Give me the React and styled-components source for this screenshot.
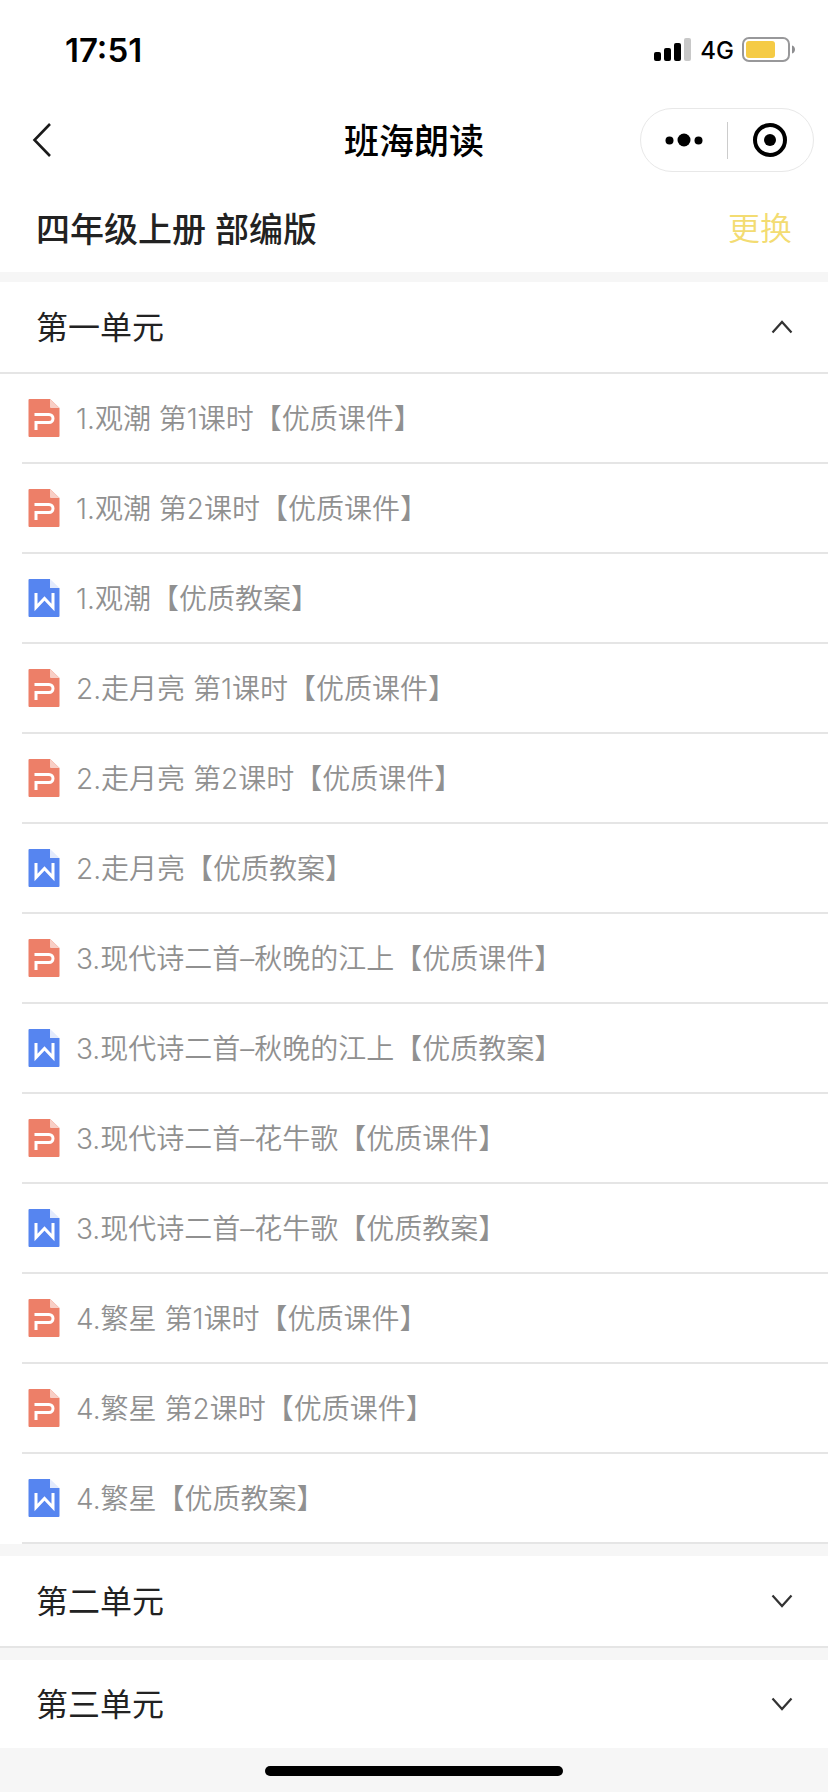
import React, { useState } from "react";
import styled, { createGlobalStyle } from "styled-components";

const units = [
  {
    id: 1,
    name: "第一单元",
    files: [
      { type: "ppt", name: "1.观潮 第1课时【优质课件】" },
      { type: "ppt", name: "1.观潮 第2课时【优质课件】" },
      { type: "word", name: "1.观潮【优质教案】" },
      { type: "ppt", name: "2.走月亮 第1课时【优质课件】" },
      { type: "ppt", name: "2.走月亮 第2课时【优质课件】" },
      { type: "word", name: "2.走月亮【优质教案】" },
      { type: "ppt", name: "3.现代诗二首–秋晚的江上【优质课件】" },
      { type: "word", name: "3.现代诗二首–秋晚的江上【优质教案】" },
      { type: "ppt", name: "3.现代诗二首–花牛歌【优质课件】" },
      { type: "word", name: "3.现代诗二首–花牛歌【优质教案】" },
      { type: "ppt", name: "4.繁星 第1课时【优质课件】" },
      { type: "ppt", name: "4.繁星 第2课时【优质课件】" },
      { type: "word", name: "4.繁星【优质教案】" },
    ],
  },
  { id: 2, name: "第二单元", files: [] },
  { id: 3, name: "第三单元", files: [] },
];

const SignalIcon = () => (
  <svg width="38" height="24" viewBox="0 0 38 24" aria-hidden="true">
    <rect x="0" y="14" width="7" height="9" rx="2" />
    <rect x="10" y="10" width="7" height="13" rx="2" />
    <rect x="20" y="5" width="7" height="18" rx="2" />
    <rect x="30" y="0" width="7" height="23" rx="2" fill="#c8c8c8" />
  </svg>
);

const BatteryIcon = () => (
  <svg width="53" height="26" viewBox="0 0 53 26" aria-hidden="true">
    <rect
      x="1"
      y="1"
      width="46"
      height="23"
      rx="6"
      fill="none"
      stroke="#98989a"
      strokeWidth="2"
    />
    <rect x="4" y="4" width="29" height="17" rx="3" fill="#f5cb45" />
    <path d="M50 8.500c4 1 4 7 0 8z" fill="#8e8e90" />
  </svg>
);

const BackIcon = () => (
  <svg width="20" height="36" viewBox="0 0 20 36" aria-hidden="true">
    <path
      d="M18 2 2.500 18 18 34"
      fill="none"
      stroke="#1a1a1a"
      strokeWidth="2.600"
    />
  </svg>
);

const MoreIcon = () => (
  <svg width="38" height="36" viewBox="0 0 38 36" aria-hidden="true">
    <circle cx="4.500" cy="18.500" r="4" />
    <circle cx="19" cy="18" r="6.500" />
    <circle cx="33.500" cy="18.500" r="4" />
  </svg>
);

const CloseIcon = () => (
  <svg width="36" height="36" viewBox="0 0 36 36" aria-hidden="true">
    <circle cx="18" cy="18" r="15" fill="none" stroke="#000" strokeWidth="4" />
    <circle cx="18" cy="18" r="6" />
  </svg>
);

const ArrowIcon = ({ open }) => (
  <svg width="22" height="14" viewBox="0 0 22 14" aria-hidden="true">
    <path
      d={open ? "M1.500 12.500 11 2l9.500 10.500" : "M1.500 1.500 11 12l9.500-10.500"}
      fill="none"
      stroke="#333"
      strokeWidth="2.200"
    />
  </svg>
);

const PptIcon = () => (
  <svg width="32" height="40" viewBox="0 0 32 40" aria-hidden="true">
    <path
      d="M1.500 1H22l9.500 9v28a1 1 0 0 1-1 1h-29a1 1 0 0 1-1-1V2a1 1 0 0 1 1-1z"
      fill="#ed7f68"
    />
    <path d="M22 1v8a1 1 0 0 0 1 1h8.500z" fill="#f8cfc6" />
    <path
      d="M6.500 16.500H21a4 4 0 0 1 0 8H8V32"
      fill="none"
      stroke="#fff"
      strokeWidth="3"
    />
  </svg>
);

const WordIcon = () => (
  <svg width="32" height="40" viewBox="0 0 32 40" aria-hidden="true">
    <path
      d="M1.500 1H22v9h9.500v28a1 1 0 0 1-1 1h-29a1 1 0 0 1-1-1V2a1 1 0 0 1 1-1z"
      fill="#5685f0"
    />
    <path d="M22 1v9h9.500z" fill="#e3ebfd" />
    <path
      d="M8 15v14.500l8.500-9 8.500 9V15"
      fill="none"
      stroke="#fff"
      strokeWidth="3"
    />
  </svg>
);

const Unit = ({ unit, open, onToggle }) => (
  <Section>
    <UnitHeader aria-expanded={open} onClick={onToggle}>
      <UnitName>{unit.name}</UnitName>
      <ArrowIcon open={open} />
    </UnitHeader>
    {open && (
      <FileList>
        {unit.files.map((file) => (
          <FileItem key={file.name}>
            <FileLink href="#">
              {file.type === "ppt" ? <PptIcon /> : <WordIcon />}
              <FileName>{file.name}</FileName>
            </FileLink>
          </FileItem>
        ))}
      </FileList>
    )}
  </Section>
);

const App = () => {
  const [openId, setOpenId] = useState(1);

  return (
    <>
      <GlobalStyle />
      <Page>
        <StatusBar>
          <Time>17:51</Time>
          <StatusIcons>
            <SignalIcon />
            <Network>4G</Network>
            <BatteryIcon />
          </StatusIcons>
        </StatusBar>
        <NavBar>
          <BackButton aria-label="返回">
            <BackIcon />
          </BackButton>
          <Title>班海朗读</Title>
          <Capsule>
            <CapsuleButton aria-label="更多">
              <MoreIcon />
            </CapsuleButton>
            <Divider />
            <CapsuleButton aria-label="关闭">
              <CloseIcon />
            </CapsuleButton>
          </Capsule>
        </NavBar>
        <BookBar>
          <BookName>四年级上册 部编版</BookName>
          <ChangeButton>更换</ChangeButton>
        </BookBar>
        <Units>
          {units.map((unit) => (
            <Unit
              key={unit.id}
              unit={unit}
              open={openId === unit.id}
              onToggle={() => setOpenId(openId === unit.id ? null : unit.id)}
            />
          ))}
        </Units>
        <Footer>
          <HomeIndicator />
        </Footer>
      </Page>
    </>
  );
};

export default App;

const GlobalStyle = createGlobalStyle`
  * {
    box-sizing: border-box;
  }

  body {
    margin: 0;
    background-color: #f6f6f6;
    font-family: Inter, "Noto Sans CJK SC", sans-serif;
  }

  button {
    margin: 0;
    padding: 0;
    border: none;
    background: none;
    font-family: inherit;
    cursor: pointer;
  }

  svg {
    display: block;
    flex-shrink: 0;
  }
`;

const Page = styled.div`
  display: flex;
  flex-direction: column;
  min-height: 100vh;
`;

const StatusBar = styled.div`
  display: flex;
  align-items: center;
  justify-content: space-between;
  height: 92px;
  padding: 8px 33px 0 65px;
  background-color: #fff;
`;

const Time = styled.span`
  font-size: 33px;
  font-weight: 600;
`;

const StatusIcons = styled.div`
  display: flex;
  align-items: center;
  gap: 8px;
`;

const Network = styled.span`
  font-size: 24px;
  font-weight: 500;
`;

const NavBar = styled.header`
  display: grid;
  grid-template-columns: 1fr auto 1fr;
  align-items: center;
  height: 96px;
  padding: 0 14px 0 32px;
  background-color: #fff;
`;

const BackButton = styled.button`
  justify-self: start;
`;

const Title = styled.h1`
  margin: 0;
  padding: 0 18px 4px 0;
  font-size: 35px;
  font-weight: 500;
`;

const Capsule = styled.div`
  display: flex;
  align-items: center;
  justify-self: end;
  width: 174px;
  height: 64px;
  border: 1px solid #e8e8e8;
  border-radius: 32px;
`;

const CapsuleButton = styled.button`
  display: flex;
  flex: 1;
  justify-content: center;
`;

const Divider = styled.span`
  width: 1px;
  height: 37px;
  background-color: #ccc;
`;

const BookBar = styled.div`
  display: flex;
  align-items: center;
  justify-content: space-between;
  height: 84px;
  padding: 0 36px 6px;
  background-color: #fff;
`;

const BookName = styled.h2`
  margin: 0;
  color: #222;
  font-size: 34px;
  font-weight: 500;
`;

const ChangeButton = styled.button`
  padding-bottom: 2px;
  color: #f3dc72;
  font-size: 32px;
  font-weight: 350;
`;

const Units = styled.main`
  display: flex;
  flex-direction: column;
  gap: 12px;
  padding-top: 10px;
`;

const UnitHeader = styled.button`
  display: flex;
  align-items: center;
  justify-content: space-between;
  width: 100%;
  height: 92px;
  padding: 0 35px 0 36px;
  border-bottom: 2px solid #e5e5e5;
  color: #222;
`;

const UnitName = styled.span`
  padding-bottom: 4px;
  font-size: 32px;
  font-weight: 400;
`;

const Section = styled.section`
  background-color: #fff;

  &:last-child > ${UnitHeader} {
    height: 88px;
    border-bottom: none;
  }
`;

const FileList = styled.ul`
  margin: 0;
  padding: 0 0 0 22px;
  list-style-type: none;
`;

const FileItem = styled.li`
  border-bottom: 2px solid #e5e5e5;
`;

const FileLink = styled.a`
  display: flex;
  align-items: center;
  gap: 16px;
  height: 88px;
  padding-left: 6px;
  text-decoration: none;
`;

const FileName = styled.span`
  padding-bottom: 2px;
  color: #909090;
  font-size: 28px;
  font-weight: 350;
`;

const Footer = styled.footer`
  display: flex;
  flex: 1;
  align-items: flex-end;
  justify-content: center;
  min-height: 44px;
  padding-bottom: 16px;
`;

const HomeIndicator = styled.div`
  width: 36%;
  height: 10px;
  border-radius: 5px;
  background-color: #000;
`;
